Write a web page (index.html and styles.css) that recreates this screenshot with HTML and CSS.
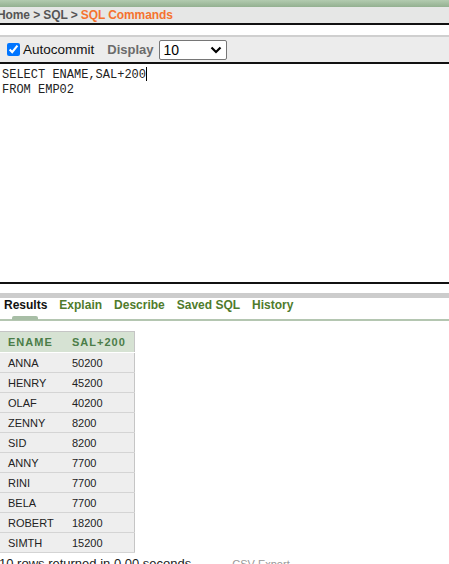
FILE: index.html
```html
<!DOCTYPE html>
<html>
<head>
<meta charset="utf-8">
<link rel="stylesheet" href="styles.css">
</head>
<body>
<div class="topbar"></div>
<div class="crumbs"><span class="crumb-text">Home &gt; SQL &gt; <span class="current">SQL Commands</span></span></div>
<div class="spacer"></div>
<div class="toolbar">
  <label class="auto"><input type="checkbox" checked class="chk"><span>Autocommit</span></label>
  <span class="display">Display</span>
  <div class="select"><span>10</span><svg width="12" height="8" viewBox="0 0 12 8"><path d="M1.5 1.5 L6 6 L10.5 1.5" fill="none" stroke="#000" stroke-width="2.2"/></svg></div>
</div>
<div class="editor"><div class="code">SELECT ENAME,SAL+200<span class="caret"></span>
FROM EMP02</div></div>
<div class="gap"></div>
<div class="tabs">
  <span class="tab active">Results</span>
  <span class="tab">Explain</span>
  <span class="tab">Describe</span>
  <span class="tab">Saved SQL</span>
  <span class="tab">History</span>
</div>
<div class="results">
<table class="grid">
  <thead><tr><th>ENAME</th><th>SAL+200</th></tr></thead>
  <tbody>
    <tr><td>ANNA</td><td>50200</td></tr>
    <tr><td>HENRY</td><td>45200</td></tr>
    <tr><td>OLAF</td><td>40200</td></tr>
    <tr><td>ZENNY</td><td>8200</td></tr>
    <tr><td>SID</td><td>8200</td></tr>
    <tr><td>ANNY</td><td>7700</td></tr>
    <tr><td>RINI</td><td>7700</td></tr>
    <tr><td>BELA</td><td>7700</td></tr>
    <tr><td>ROBERT</td><td>18200</td></tr>
    <tr><td>SIMTH</td><td>15200</td></tr>
  </tbody>
</table>
<div class="footer"><span class="count">10 rows returned in 0.00 seconds</span><span class="csv">CSV Export</span></div>
</div>
</body>
</html>
```
FILE: styles.css
```css
html, body {
  margin: 0;
  padding: 0;
  background: #fff;
  overflow: hidden;
  font-family: "Liberation Sans", Arial, sans-serif;
}
.topbar {
  height: 7px;
  background: linear-gradient(#b3cbb0, #93b090);
}
.crumbs {
  height: 16px;
  background: #e6e7e6;
  border-bottom: 2px solid #111;
  font-size: 12px;
  font-weight: bold;
  color: #555;
  line-height: 16px;
  white-space: nowrap;
}
.crumb-text {
  margin-left: -3px;
  letter-spacing: -0.1px;
}
.current {
  color: #f5732f;
}
.spacer {
  height: 10px;
  border-bottom: 2px solid #cfcfcf;
}
.toolbar {
  height: 25px;
  background: #ececec;
  border-bottom: 2px solid #111;
  display: flex;
  align-items: center;
  padding-left: 7px;
}
.auto {
  display: flex;
  align-items: center;
  font-size: 13.5px;
  color: #111;
}
.chk {
  margin: 0 3px 0 0;
  width: 13px;
  height: 13px;
  accent-color: #0075ff;
}
.display {
  margin-left: 13px;
  font-size: 13px;
  font-weight: bold;
  color: #6b6b6b;
}
.select {
  margin-left: 5px;
  width: 58px;
  height: 18px;
  border: 1px solid #767676;
  border-radius: 2px;
  background: #fff;
  display: flex;
  align-items: center;
  justify-content: space-between;
  padding: 0 4px 0 4px;
  box-sizing: content-box;
  font-size: 14px;
  color: #000;
}
.editor {
  height: 218px;
  border-bottom: 2px solid #111;
  background: #fff;
}
.code {
  font-family: "Liberation Mono", "DejaVu Sans Mono", monospace;
  font-size: 12px;
  line-height: 15px;
  color: #222;
  white-space: pre;
  padding: 3px 0 0 2px;
}
.caret {
  display: inline-block;
  width: 1px;
  height: 14px;
  background: #000;
  vertical-align: -3px;
}
.gap {
  height: 9px;
  border-bottom: 5px solid #cccccc;
}
.tabs {
  height: 21px;
  display: flex;
  align-items: flex-start;
  gap: 12px;
  padding-left: 4px;
  border-bottom: 2px solid #b4c6b1;
  font-size: 12px;
  font-weight: bold;
  color: #4f7b2c;
  line-height: 14px;
  padding-top: 0;
}
.tab.active {
  color: #111;
  position: relative;
}
.tab.active::after {
  content: "";
  position: absolute;
  left: 8px;
  width: 26px;
  top: 18px;
  height: 4px;
  border-radius: 2px 2px 0 0;
  background: #a8bea6;
}
.results {
  padding-top: 10px;
}
.grid {
  border-collapse: collapse;
  border: 1px solid #c5c5c5;
  border-left: none;
  font-size: 11px;
}
.grid th {
  background: #d6e2d3;
  color: #4b7d48;
  font-weight: bold;
  letter-spacing: 1px;
  text-align: left;
  height: 20px;
  padding: 0 8px;
  border-bottom: 1px solid #fff;
}
.grid th:first-child {
  width: 48px;
}
.grid th:last-child {
  width: 54px;
}
.grid td {
  background: #eeeeee;
  color: #222;
  height: 19px;
  padding: 0 8px;
  border-top: 1px solid #fff;
  border-bottom: 1px solid #d4d4d4;
}
.footer {
  margin-top: 3px;
  white-space: nowrap;
  display: flex;
  align-items: baseline;
}
.count {
  color: #222;
  font-size: 13px;
  margin-left: -1px;
}
.csv {
  color: #999;
  margin-left: 41px;
  font-size: 11px;
}
```
